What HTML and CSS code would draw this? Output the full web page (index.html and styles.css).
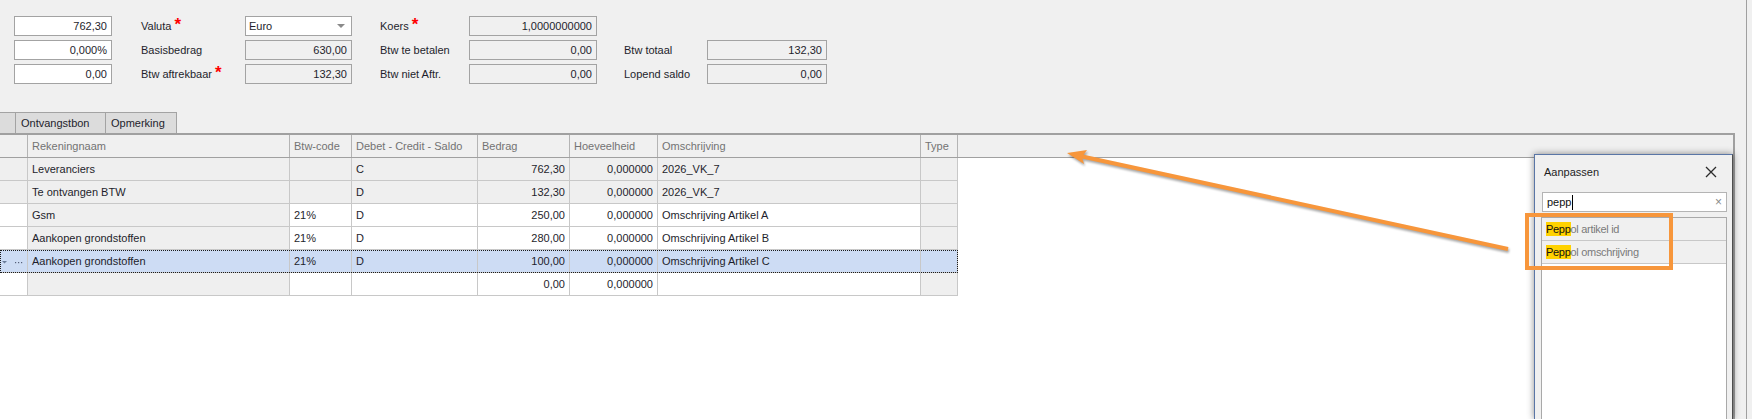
FILE: index.html
```html
<!DOCTYPE html>
<html lang="nl">
<head>
  <meta charset="UTF-8" />
  <title>Boeking</title>
  <link rel="stylesheet" href="styles.css">
</head>
<body>
  <div class="page">
    <div class="form">
      <div class="field edit">762,30</div>
      <div class="label">Valuta <span class="req">*</span></div>
      <div class="field edit combo">Euro<span class="caret"></span></div>
      <div class="label">Koers <span class="req">*</span></div>
      <div class="field">1,0000000000</div>
      <div></div>
      <div></div>

      <div class="field edit">0,000%</div>
      <div class="label">Basisbedrag</div>
      <div class="field">630,00</div>
      <div class="label">Btw te betalen</div>
      <div class="field">0,00</div>
      <div class="label">Btw totaal</div>
      <div class="field">132,30</div>

      <div class="field edit">0,00</div>
      <div class="label">Btw aftrekbaar <span class="req">*</span></div>
      <div class="field">132,30</div>
      <div class="label">Btw niet Aftr.</div>
      <div class="field">0,00</div>
      <div class="label">Lopend saldo</div>
      <div class="field">0,00</div>
    </div>

    <div class="tabs">
      <div class="tab stub"></div>
      <div class="tab">Ontvangstbon</div>
      <div class="tab">Opmerking</div>
    </div>

    <div class="grid">
      <div class="head">
        <div class="cell c-ind"></div>
        <div class="cell c-name">Rekeningnaam</div>
        <div class="cell c-btw">Btw-code</div>
        <div class="cell c-dc">Debet - Credit - Saldo</div>
        <div class="cell c-amt">Bedrag</div>
        <div class="cell c-qty">Hoeveelheid</div>
        <div class="cell c-desc">Omschrijving</div>
        <div class="cell c-type">Type</div>
        <div class="head-fill"></div>
      </div>

      <div class="row locked">
        <div class="cell c-ind"></div>
        <div class="cell c-name">Leveranciers</div>
        <div class="cell c-btw"></div>
        <div class="cell c-dc">C</div>
        <div class="cell c-amt num">762,30</div>
        <div class="cell c-qty num">0,000000</div>
        <div class="cell c-desc">2026_VK_7</div>
        <div class="cell c-type"></div>
      </div>
      <div class="row locked">
        <div class="cell c-ind"></div>
        <div class="cell c-name">Te ontvangen BTW</div>
        <div class="cell c-btw"></div>
        <div class="cell c-dc">D</div>
        <div class="cell c-amt num">132,30</div>
        <div class="cell c-qty num">0,000000</div>
        <div class="cell c-desc">2026_VK_7</div>
        <div class="cell c-type"></div>
      </div>
      <div class="row">
        <div class="cell c-ind"></div>
        <div class="cell c-name">Gsm</div>
        <div class="cell c-btw">21%</div>
        <div class="cell c-dc">D</div>
        <div class="cell c-amt num">250,00</div>
        <div class="cell c-qty num">0,000000</div>
        <div class="cell c-desc">Omschrijving Artikel A</div>
        <div class="cell c-type"></div>
      </div>
      <div class="row">
        <div class="cell c-ind"></div>
        <div class="cell c-name">Aankopen grondstoffen</div>
        <div class="cell c-btw">21%</div>
        <div class="cell c-dc">D</div>
        <div class="cell c-amt num">280,00</div>
        <div class="cell c-qty num">0,000000</div>
        <div class="cell c-desc">Omschrijving Artikel B</div>
        <div class="cell c-type"></div>
      </div>
      <div class="row selected">
        <div class="cell c-ind">
          <svg width="26" height="22" viewBox="0 0 26 22">
            <path d="M2 11 L7 11 L4.5 13.5 Z" fill="#6b7d99"/>
            <rect x="15" y="12" width="1.2" height="1.2" fill="#55607a"/>
            <rect x="18" y="12" width="1.2" height="1.2" fill="#55607a"/>
            <rect x="21" y="12" width="1.2" height="1.2" fill="#55607a"/>
          </svg>
        </div>
        <div class="cell c-name">Aankopen grondstoffen</div>
        <div class="cell c-btw">21%</div>
        <div class="cell c-dc">D</div>
        <div class="cell c-amt num">100,00</div>
        <div class="cell c-qty num">0,000000</div>
        <div class="cell c-desc">Omschrijving Artikel C</div>
        <div class="cell c-type"></div>
      </div>
      <div class="row">
        <div class="cell c-ind"></div>
        <div class="cell c-name"></div>
        <div class="cell c-btw"></div>
        <div class="cell c-dc"></div>
        <div class="cell c-amt num">0,00</div>
        <div class="cell c-qty num">0,000000</div>
        <div class="cell c-desc"></div>
        <div class="cell c-type"></div>
      </div>
    </div>
  </div>

  <!-- kolommen aanpassen -->
  <div class="panel">
    <div class="panel-title">
      <span>Aanpassen</span>
      <svg class="close" width="12" height="12" viewBox="0 0 12 12">
        <path d="M1 1 L11 11 M11 1 L1 11" stroke="#2b2b2b" stroke-width="1.3"/>
      </svg>
    </div>
    <div class="search">
      <span>pepp</span><span class="text-caret"></span>
      <span class="clear">×</span>
    </div>
    <div class="list">
      <div class="item"><mark>Pepp</mark>ol artikel id</div>
      <div class="item"><mark>Pepp</mark>ol omschrijving</div>
    </div>
  </div>

  <div class="callout"></div>
  <svg class="arrow" width="1752" height="419" viewBox="0 0 1752 419">
    <line x1="1508" y1="249" x2="1080" y2="156" stroke="#f7963b" stroke-width="4"/>
    <polygon points="1067,153 1087,150 1082,157 1084,164" fill="#f7963b"/>
  </svg>
</body>
</html>
```

FILE: styles.css
```css
body {
  margin: 0;
  width: 1752px;
  height: 419px;
  overflow: hidden;
  background-color: #f0f0f0;
  font-family: "Liberation Sans", Arial, sans-serif;
  font-size: 11px;
  color: #1e1e2c;
  position: relative;
}

.page {
  width: 1746px;
  height: 419px;
  border-right: 1px solid #a0a0a0;
  box-sizing: content-box;
}

/* bovenste formulier */
.form {
  display: grid;
  grid-template-columns: 98px 133px 107px 117px 128px 110px 120px;
  grid-auto-rows: 20px;
  row-gap: 4px;
  padding: 16px 0 0 14px;
}

.field {
  box-sizing: border-box;
  border: 1px solid #a3a3a3;
  background: #f0f0f0;
  display: flex;
  align-items: center;
  justify-content: flex-end;
  padding: 0 4px;
}

.field.edit {
  background: #fff;
}

.field.combo {
  justify-content: space-between;
  padding-left: 3px;
}

.caret {
  width: 0;
  height: 0;
  border-left: 4px solid transparent;
  border-right: 4px solid transparent;
  border-top: 4px solid #8a8a8a;
  margin-right: 2px;
}

.label {
  display: flex;
  align-items: center;
  padding-left: 29px;
}

.form .label:nth-child(7n+4) {
  padding-left: 28px;
}

.form .label:nth-child(7n+6) {
  padding-left: 27px;
}

.req {
  color: #f00;
  font-size: 17px;
  font-weight: bold;
  line-height: 12px;
  align-self: flex-start;
  margin: 3px 0 0 3px;
}

/* tabbladen */
.tabs {
  display: flex;
  margin-top: 28px;
  height: 21px;
}

.tab {
  box-sizing: border-box;
  height: 21px;
  background: #dcdcdc;
  border: 1px solid #a3a3a3;
  border-bottom: none;
  padding: 0 6px 0 5px;
  display: flex;
  align-items: center;
  margin-right: -1px;
}

.tab:nth-child(2) { width: 91px; }
.tab:nth-child(3) { width: 72px; }

.tab.stub {
  width: 16px;
  border-left: none;
}

/* raster */
.grid {
  width: 1733px;
  height: 284px;
  background: #fff;
  border-top: 2px solid #a0a0a0;
  border-right: 2px solid #a0a0a0;
}

.head {
  display: flex;
  height: 22px;
  background: #f0f0f0;
  border-bottom: 1px solid #a0a0a0;
  color: #737373;
}

.head .cell {
  border-right-color: #b4b4b4;
}

.head-fill {
  flex: 1;
}

.row {
  display: flex;
  width: 958px;
  height: 22px;
  border-bottom: 1px solid #c8c8c8;
  background: #fff;
}

.cell {
  box-sizing: border-box;
  height: 22px;
  border-right: 1px solid #c8c8c8;
  padding: 0 4px;
  display: flex;
  align-items: center;
  white-space: nowrap;
  overflow: hidden;
  flex: none;
}

.cell.num {
  justify-content: flex-end;
}

.c-ind { width: 28px; padding: 0; }
.c-name { width: 262px; }
.c-btw { width: 62px; }
.c-dc { width: 126px; }
.c-amt { width: 92px; }
.c-qty { width: 88px; }
.c-desc { width: 263px; }
.c-type { width: 37px; }

.row .c-name,
.row .c-type {
  background: #efefef;
}

.row.locked .cell {
  background: #efefef;
}

.row.selected {
  outline: 1px dotted #1c1c1c;
  outline-offset: -1px;
}

.row.selected .cell {
  background: #cddcf4;
}

/* paneel Aanpassen */
.panel {
  position: absolute;
  left: 1534px;
  top: 154px;
  width: 199px;
  height: 265px;
  box-sizing: border-box;
  background: #f0f0f0;
  border: 1px solid #5a76a6;
  border-right-color: #4d4d4d;
  border-bottom: none;
  box-shadow: 0 0 7px rgba(0,0,0,0.45);
  padding: 0 5px 0 6px;
  overflow: hidden;
}

.panel-title {
  height: 34px;
  display: flex;
  align-items: center;
  justify-content: space-between;
  padding: 0 10px 0 3px;
  color: #1e1e1e;
}

.search {
  margin: 3px 0 0 1px;
  height: 20px;
  box-sizing: border-box;
  background: #fff;
  border: 1px solid #b4b4b4;
  display: flex;
  align-items: center;
  padding-left: 4px;
  color: #111;
}

.text-caret {
  width: 1px;
  height: 15px;
  background: #000;
  margin-left: 1px;
}

.clear {
  margin-left: auto;
  margin-right: 4px;
  color: #8a8a8a;
  font-size: 12px;
}

.list {
  margin-top: 5px;
  width: 186px;
  height: 203px;
  box-sizing: border-box;
  background: #fff;
  border: 1px solid #a9a9a9;
  border-bottom: none;
}

.item {
  height: 22px;
  border-bottom: 1px solid #c8c8c8;
  background: #f0f0f0;
  display: flex;
  align-items: center;
  padding-left: 4px;
  color: #7a7a7a;
  letter-spacing: -0.3px;
}

.item mark {
  background: #ffd200;
  color: #111;
  padding: 1px 0;
}

/* annotatie */
.callout {
  position: absolute;
  left: 1525px;
  top: 213px;
  width: 148px;
  height: 57px;
  box-sizing: border-box;
  border: 4px solid #f7963b;
}

.arrow {
  position: absolute;
  left: 0;
  top: 0;
  pointer-events: none;
  filter: drop-shadow(1px 2px 1px rgba(0,0,0,0.35));
}
```
